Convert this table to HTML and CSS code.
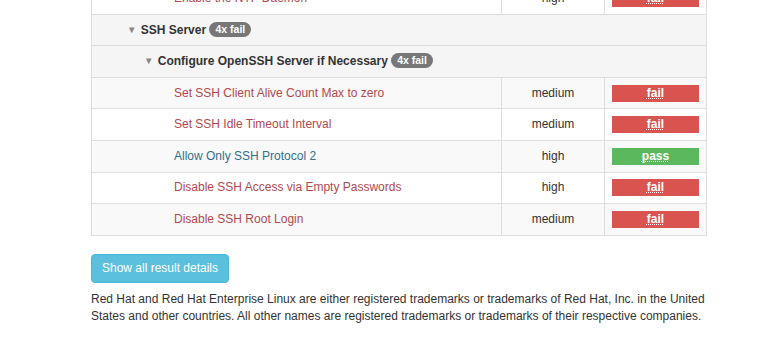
FILE: index.html
```html
<!DOCTYPE html>
<html>
<head>
<meta charset="utf-8">
<link rel="stylesheet" href="styles.css">
</head>
<body>
<div class="page">
  <table class="rules">
    <tbody>
      <tr class="rule white">
        <td class="title fail"><span class="lvl3">Enable the NTP Daemon</span></td>
        <td class="sev">high</td>
        <td class="res"><span class="label fail-l"><abbr>fail</abbr></span></td>
      </tr>
      <tr class="group">
        <td colspan="3"><span class="lvl1"><span class="tri">&#9660;</span> SSH Server <span class="badge">4x fail</span></span></td>
      </tr>
      <tr class="group">
        <td colspan="3"><span class="lvl2"><span class="tri">&#9660;</span> Configure OpenSSH Server if Necessary <span class="badge">4x fail</span></span></td>
      </tr>
      <tr class="rule gray">
        <td class="title fail"><span class="lvl3">Set SSH Client Alive Count Max to zero</span></td>
        <td class="sev">medium</td>
        <td class="res"><span class="label fail-l"><abbr>fail</abbr></span></td>
      </tr>
      <tr class="rule white">
        <td class="title fail"><span class="lvl3">Set SSH Idle Timeout Interval</span></td>
        <td class="sev">medium</td>
        <td class="res"><span class="label fail-l"><abbr>fail</abbr></span></td>
      </tr>
      <tr class="rule gray">
        <td class="title pass"><span class="lvl3">Allow Only SSH Protocol 2</span></td>
        <td class="sev">high</td>
        <td class="res"><span class="label pass-l"><abbr>pass</abbr></span></td>
      </tr>
      <tr class="rule white">
        <td class="title fail"><span class="lvl3">Disable SSH Access via Empty Passwords</span></td>
        <td class="sev">high</td>
        <td class="res"><span class="label fail-l"><abbr>fail</abbr></span></td>
      </tr>
      <tr class="rule gray">
        <td class="title fail"><span class="lvl3">Disable SSH Root Login</span></td>
        <td class="sev">medium</td>
        <td class="res"><span class="label fail-l"><abbr>fail</abbr></span></td>
      </tr>
    </tbody>
  </table>
  <button class="btn-info" type="button">Show all result details</button>
  <p class="footer">Red Hat and Red Hat Enterprise Linux are either registered trademarks or trademarks of Red Hat, Inc. in the United States and other countries. All other names are registered trademarks or trademarks of their respective companies.</p>
</div>
</body>
</html>
```

FILE: styles.css
```css
html, body {
  margin: 0;
  padding: 0;
  background: #fff;
}
body {
  font-family: "Liberation Sans", Arial, sans-serif;
  font-size: 12px;
  color: #333;
}
.page {
  width: 616px;
  margin-left: 91px;
  margin-top: -18px;
}
.rules {
  width: 615px;
  border-collapse: collapse;
  border: 1px solid #ddd;
  table-layout: fixed;
}
.rules td {
  height: 31.6px;
  padding: 0 7px;
  box-sizing: border-box;
  border-top: 1px solid #ddd;
  vertical-align: middle;
  line-height: 17px;
}
.rules td.title { width: 410px; }
.rules td.sev {
  width: 103px;
  text-align: center;
  border-left: 1px solid #ddd;
  color: #333;
}
.rules td.res {
  width: 102px;
  border-left: 1px solid #ddd;
}
.rule.gray td { background: #f9f9f9; }
.rule.white td { background: #fff; }
.group td {
  background: #f5f5f5;
  font-weight: bold;
  color: #333;
}
.lvl1 { padding-left: 28px; }
.lvl2 { padding-left: 45px; }
.lvl3 { padding-left: 75px; }
.tri {
  font-size: 9.5px;
  color: #888;
  vertical-align: 1px;
  margin-right: 1px;
}
.badge {
  display: inline-block;
  background: #777;
  color: #fff;
  font-size: 10.5px;
  font-weight: bold;
  line-height: 15px;
  padding: 0 6px;
  border-radius: 8px;
  vertical-align: 1px;
}
.title.fail { color: #b2494f; }
.title.pass { color: #31708f; }
.label {
  display: block;
  height: 17px;
  line-height: 17px;
  text-align: center;
  color: #fff;
  font-weight: bold;
  font-size: 12px;
}
.fail-l { background: #d9534f; }
.pass-l { background: #5cb85c; }
.label abbr {
  text-decoration: underline dotted;
  text-decoration-thickness: 1px;
}
.btn-info {
  display: block;
  margin-top: 18px;
  width: 138px;
  height: 29px;
  padding: 0;
  background: #5bc0de;
  border: 1px solid #46b8da;
  border-radius: 4px;
  color: #fff;
  font-family: "Liberation Sans", Arial, sans-serif;
  font-size: 12px;
}
.footer {
  margin: 8px 0 0;
  width: 620px;
  line-height: 17.5px;
  color: #333;
}
```
